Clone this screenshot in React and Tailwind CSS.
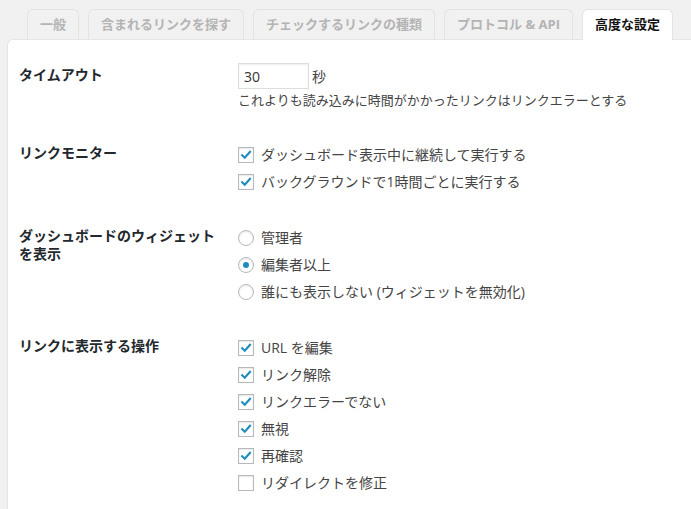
import { useState } from 'react'

const tabs = ['一般', '含まれるリンクを探す', 'チェックするリンクの種類', 'プロトコル & API', '高度な設定']

function Checkbox({ checked, label }) {
  return (
    <label className="flex items-center h-[27px] gap-[7px]">
      <span className="w-4 h-4 shrink-0 border border-[#b4b9be] bg-white shadow-[inset_0_1px_2px_rgba(0,0,0,0.1)] flex items-center justify-center">
        {checked && (
          <svg viewBox="0 0 16 16" className="w-4 h-4">
            <path d="M3.6 8.2 L6.6 11.2 L12.6 4.4" fill="none" stroke="#1e8cbe" strokeWidth="2.4" strokeLinecap="square" />
          </svg>
        )}
      </span>
      <span>{label}</span>
    </label>
  )
}

function Radio({ checked, label }) {
  return (
    <label className="flex items-center h-[27px] gap-[7px]">
      <span className="w-4 h-4 shrink-0 rounded-full border border-[#b4b9be] bg-white shadow-[inset_0_1px_2px_rgba(0,0,0,0.1)] flex items-center justify-center">
        {checked && <span className="w-[6px] h-[6px] rounded-full bg-[#1e8cbe]" />}
      </span>
      <span>{label}</span>
    </label>
  )
}

function Row({ title, className = '', children }) {
  return (
    <div className={`flex ${className}`}>
      <div className="w-[219px] shrink-0">
        <div className="max-w-[200px] pt-[3px] font-bold text-[#23282d] leading-[18px]">{title}</div>
      </div>
      <div className="flex flex-col">{children}</div>
    </div>
  )
}

export default function App() {
  const [timeout, setTimeout] = useState('30')

  return (
    <div
      className="h-screen flex flex-col bg-[#f1f1f1] pt-[9px] text-[14px] text-[#444] overflow-hidden"
      style={{ fontFamily: '"Open Sans", "Noto Sans CJK JP", sans-serif' }}
    >
      <div className="flex items-end h-[31px] shrink-0 gap-[9px] pl-[27px] -mb-px relative z-10">
        {tabs.map((t, i) => {
          const active = i === tabs.length - 1
          return active ? (
            <div key={t} className="h-[31px] px-[12px] flex items-center bg-white border border-b-0 border-[#e3e3e3] rounded-t-[6px] text-[13px] font-bold text-[#111]">
              {t}
            </div>
          ) : (
            <div key={t} className="h-[30px] mb-px px-[12px] flex items-center bg-[#f1f1f1] border border-b-0 border-[#e3e3e3] rounded-t-[6px] text-[13px] font-bold text-[#b4b4b4]">
              {t}
            </div>
          )
        })}
      </div>

      <div className="flex-1 ml-[7px] bg-white border border-r-0 border-b-0 border-[#e5e5e5] rounded-tl-[6px] pt-[23px] pl-[11px]">
        <Row title="タイムアウト">
          <div className="flex items-center h-[26px]">
            <input
              value={timeout}
              onChange={e => setTimeout(e.target.value)}
              className="w-[71px] h-[26px] px-[5px] border border-[#ddd] shadow-[inset_0_1px_2px_rgba(0,0,0,0.07)] text-[14px] text-[#333] outline-none"
            />
            <span className="ml-[3px]">秒</span>
          </div>
          <p className="mt-px leading-[20px] text-[13px]">これよりも読み込みに時間がかかったリンクはリンクエラーとする</p>
        </Row>

        <Row title="リンクモニター" className="mt-[31px]">
          <Checkbox checked label="ダッシュボード表示中に継続して実行する" />
          <Checkbox checked label="バックグラウンドで1時間ごとに実行する" />
        </Row>

        <Row title="ダッシュボードのウィジェットを表示" className="mt-[29px]">
          <Radio label="管理者" />
          <Radio checked label="編集者以上" />
          <Radio label="誰にも表示しない (ウィジェットを無効化)" />
        </Row>

        <Row title="リンクに表示する操作" className="mt-[29px]">
          <Checkbox checked label="URL を編集" />
          <Checkbox checked label="リンク解除" />
          <Checkbox checked label="リンクエラーでない" />
          <Checkbox checked label="無視" />
          <Checkbox checked label="再確認" />
          <Checkbox label="リダイレクトを修正" />
        </Row>
      </div>
    </div>
  )
}
